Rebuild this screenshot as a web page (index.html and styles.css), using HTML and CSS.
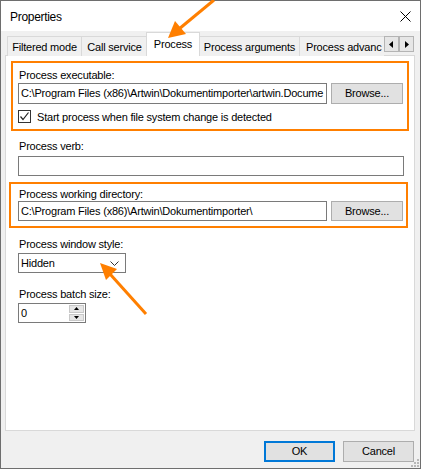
FILE: index.html
```html
<!DOCTYPE html>
<html>
<head>
<meta charset="utf-8">
<link rel="stylesheet" href="styles.css">
</head>
<body>
<div class="window">
  <div class="titlebar">
    <span class="title">Properties</span>
    <svg class="close" width="11" height="11" viewBox="0 0 11 11"><path d="M0.5 0.5 L10.5 10.5 M10.5 0.5 L0.5 10.5" stroke="#000" stroke-width="1" fill="none"/></svg>
  </div>
  <div class="content">
    <div class="tabstrip">
      <div class="tabs">
        <div class="tab t1">Filtered mode</div>
        <div class="tab t2">Call service</div>
        <div class="tab active">Process</div>
        <div class="tab t4">Process arguments</div>
        <div class="tab t5">Process advanc</div>
      </div>
      <div class="tabscroll">
        <div class="sbtn"><svg width="5" height="7" viewBox="0 0 5 7"><path d="M4 0 L0 3.5 L4 7 Z" fill="#000"/></svg></div>
        <div class="sbtn"><svg width="5" height="7" viewBox="0 0 5 7"><path d="M1 0 L5 3.5 L1 7 Z" fill="#000"/></svg></div>
      </div>
    </div>
    <div class="panel">
      <div class="hl hl1">
        <div class="lbl">Process executable:</div>
        <div class="row">
          <div class="textbox wide">C:\Program Files (x86)\Artwin\Dokumentimporter\artwin.Docume</div>
          <div class="btn browse">Browse...</div>
        </div>
        <div class="check">
          <span class="cb"><svg width="11" height="11" viewBox="0 0 11 11"><path d="M1.5 5.5 L4 8.5 L9.5 1.5" stroke="#222" stroke-width="1.2" fill="none"/></svg></span>
          <span>Start process when file system change is detected</span>
        </div>
      </div>
      <div class="field verb">
        <div class="lbl">Process verb:</div>
        <div class="textbox full"></div>
      </div>
      <div class="hl hl2">
        <div class="lbl">Process working directory:</div>
        <div class="row">
          <div class="textbox wide">C:\Program Files (x86)\Artwin\Dokumentimporter\</div>
          <div class="btn browse">Browse...</div>
        </div>
      </div>
      <div class="field wstyle">
        <div class="lbl">Process window style:</div>
        <div class="combo">
          <span>Hidden</span>
          <svg width="9" height="5" viewBox="0 0 9 5"><path d="M0.5 0.5 L4.5 4.5 L8.5 0.5" stroke="#333" stroke-width="1" fill="none"/></svg>
        </div>
      </div>
      <div class="field batch">
        <div class="lbl">Process batch size:</div>
        <div class="numeric">
          <span>0</span>
          <div class="spin">
            <div class="sp"><svg width="5" height="3" viewBox="0 0 5 3"><path d="M0 3 L2.5 0 L5 3 Z" fill="#000"/></svg></div>
            <div class="sp"><svg width="5" height="3" viewBox="0 0 5 3"><path d="M0 0 L2.5 3 L5 0 Z" fill="#000"/></svg></div>
          </div>
        </div>
      </div>
    </div>
    <div class="footer">
      <div class="btn dlg ok">OK</div>
      <div class="btn dlg">Cancel</div>
    </div>
  </div>
  <svg class="grip" width="10" height="10" viewBox="0 0 10 10">
    <rect x="7" y="1" width="2" height="2" fill="#b8b8b8"/>
    <rect x="4" y="4" width="2" height="2" fill="#b8b8b8"/>
    <rect x="7" y="4" width="2" height="2" fill="#b8b8b8"/>
    <rect x="1" y="7" width="2" height="2" fill="#b8b8b8"/>
    <rect x="4" y="7" width="2" height="2" fill="#b8b8b8"/>
    <rect x="7" y="7" width="2" height="2" fill="#b8b8b8"/>
  </svg>
  <svg class="annot" width="421" height="469" viewBox="0 0 421 469">
    <line x1="214" y1="0" x2="179" y2="29" stroke="#ff7f00" stroke-width="3"/>
    <polygon points="168,38 175,21 186,34" fill="#ff7f00"/>
    <line x1="146" y1="314" x2="110" y2="274" stroke="#ff7f00" stroke-width="3"/>
    <polygon points="100,263 117,269 106,280" fill="#ff7f00"/>
  </svg>
</div>
</body>
</html>
```

FILE: styles.css
```css
* { box-sizing: border-box; }
html, body { margin: 0; padding: 0; }
body {
  width: 421px;
  height: 469px;
  overflow: hidden;
  font-family: "Liberation Sans", Arial, sans-serif;
  font-size: 11px;
  letter-spacing: -0.2px;
  color: #000;
}
.window {
  position: relative;
  width: 421px;
  height: 469px;
  border: 1px solid #6e6e6e;
  background: #f0f0f0;
  display: flex;
  flex-direction: column;
}
.titlebar {
  height: 30px;
  background: #fff;
  display: flex;
  align-items: center;
  justify-content: space-between;
  padding: 1px 9px 0 9px;
}
.title {
  font-size: 12px;
  letter-spacing: -0.3px;
}
.close { display: block; margin-top: -1px; }
.content {
  flex: 1;
  padding: 1px 5px 0 4px;
  display: flex;
  flex-direction: column;
}
.tabstrip {
  height: 24px;
  display: flex;
  margin-bottom: -1px;
  position: relative;
  z-index: 2;
}
.tabs {
  width: 379px;
  display: flex;
  align-items: flex-end;
  padding-left: 2px;
  overflow: hidden;
}
.tab {
  flex: none;
  height: 20px;
  border: 1px solid #d9d9d9;
  border-bottom: none;
  background: #f0f0f0;
  display: flex;
  align-items: center;
  justify-content: center;
  padding-top: 1px;
  white-space: nowrap;
}
.t1 { width: 75px; }
.t2 { width: 67px; margin-left: -1px; }
.tab.active {
  width: 54px;
  height: 24px;
  margin-left: -2px;
  margin-right: -1px;
  background: #fff;
  position: relative;
  z-index: 1;
  padding-top: 0;
  padding-bottom: 1px;
}
.t4 { width: 101px; }
.t5 { width: 100px; margin-left: -1px; justify-content: flex-start; padding-left: 6px; }
.tabscroll {
  margin-top: 4px;
  height: 16px;
  width: 30px;
  display: flex;
}
.sbtn {
  width: 15px;
  height: 16px;
  background: #e6e6e6;
  border: 1px solid #b4b4b4;
  display: flex;
  align-items: center;
  justify-content: center;
}
.sbtn svg { display: block; }
.panel {
  width: 410px;
  height: 376px;
  background: #fff;
  border: 1px solid #d9d9d9;
  position: relative;
  z-index: 1;
}
.lbl {
  height: 13px;
  line-height: 13px;
  margin-left: 1px;
  white-space: nowrap;
}
.hl {
  border: 2px solid #ff7f00;
}
.hl1 {
  margin: 5px 0 0 5px;
  width: 398px;
  height: 70px;
  padding: 6px 4px 6px 5px;
}
.hl1 .lbl { margin-bottom: 1px; }
.row {
  display: flex;
  gap: 4px;
}
.textbox {
  height: 20px;
  border: 1px solid #7a7a7a;
  background: #fff;
  padding-left: 2px;
  line-height: 18px;
  white-space: nowrap;
  overflow: hidden;
}
.hl1 .textbox, .hl1 .btn { height: 21px; line-height: 19px; }
.wide { width: 309px; }
.full { width: 386px; }
.btn {
  background: #e1e1e1;
  border: 1px solid #adadad;
  text-align: center;
  line-height: 18px;
  height: 20px;
  white-space: nowrap;
}
.browse { width: 72px; }
.check {
  margin-top: 6px;
  height: 13px;
  display: flex;
  align-items: center;
  gap: 6px;
}
.cb {
  width: 13px;
  height: 13px;
  border: 1px solid #333;
  background: #fff;
  display: flex;
  align-items: center;
  justify-content: center;
}
.cb svg { display: block; }
.field { margin-left: 12px; }
.verb { margin-top: 9px; }
.verb .textbox { margin-top: 3px; }
.hl2 {
  margin: 6px 0 0 3px;
  width: 399px;
  height: 46px;
  padding: 4px 3px 5px 7px;
}
.wstyle { margin-top: 10px; }
.combo {
  margin-top: 2px;
  width: 108px;
  height: 20px;
  border: 1px solid #7a7a7a;
  display: flex;
  align-items: center;
  justify-content: space-between;
  padding: 0 6px 0 2px;
}
.combo svg { display: block; }
.batch { margin-top: 15px; }
.numeric {
  margin-top: 2px;
  width: 68px;
  height: 20px;
  border: 1px solid #7a7a7a;
  display: flex;
  align-items: center;
  justify-content: space-between;
  padding: 1px 1px 1px 2px;
}
.spin {
  width: 15px;
  height: 100%;
  display: flex;
  flex-direction: column;
  gap: 1px;
}
.sp {
  flex: 1;
  background: #e6e6e6;
  border: 1px solid #c8c8c8;
  display: flex;
  align-items: center;
  justify-content: center;
}
.sp svg { display: block; }
.footer {
  margin-top: 10px;
  display: flex;
  justify-content: flex-end;
  gap: 8px;
  padding-right: 1px;
}
.dlg {
  width: 71px;
  height: 21px;
  line-height: 19px;
}
.ok {
  border: 2px solid #0078d7;
  line-height: 17px;
}
.grip {
  position: absolute;
  right: 0;
  bottom: 0;
}
.annot {
  position: absolute;
  left: -1px;
  top: -1px;
  pointer-events: none;
  z-index: 5;
}
```
